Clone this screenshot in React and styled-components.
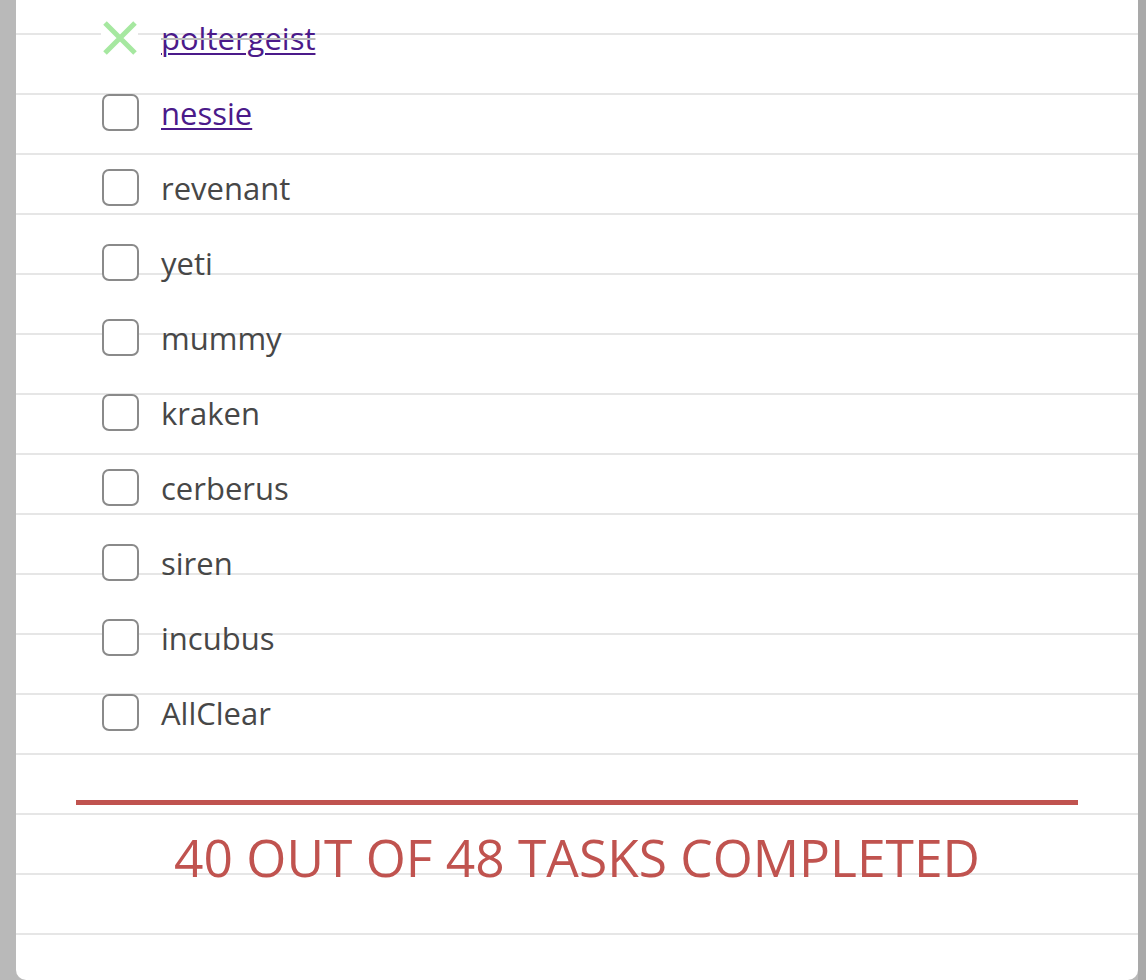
import React from "react";
import styled, { createGlobalStyle } from "styled-components";

const GlobalStyle = createGlobalStyle`
  body {
    margin: 0;
    background-color: #b9b9b9;
    font-family: "Open Sans", "Noto Sans", sans-serif;
  }
`;

const Page = styled.div`
  display: flex;
  height: 980px;
  padding-left: 16px;
  box-sizing: border-box;
`;

const Sheet = styled.main`
  flex: 1;
  display: flex;
  flex-direction: column;
  background-color: #ffffff;
  background-image: repeating-linear-gradient(
    to bottom,
    transparent 0 33px,
    #e6e6e6 33px 35px,
    transparent 35px 60px
  );
  border-radius: 0 0 10px 10px;
  overflow: hidden;
`;

const ScrollTrack = styled.div`
  width: 8px;
  background-color: #a9a9a9;
`;

const TaskList = styled.ul`
  list-style: none;
  margin: 0;
  padding: 0 0 0 86px;
`;

const Task = styled.li`
  height: 75px;
  display: flex;
  align-items: center;
  gap: 22px;
  font-size: 31px;
  color: #474747;
`;

const Box = styled.span`
  width: 37px;
  height: 37px;
  box-sizing: border-box;
  border: 2px solid #8a8a8a;
  border-radius: 7px;
  background: #ffffff;
  flex-shrink: 0;
`;

const Cross = styled.span`
  width: 37px;
  height: 37px;
  display: flex;
  align-items: center;
  justify-content: center;
  background: #ffffff;
  flex-shrink: 0;
  margin-left: -1px;
  margin-right: 1px;
`;

const Done = styled.span`
  color: #bdbdbd;
  text-decoration: line-through;
  text-decoration-thickness: 2px;
`;

const Link = styled.a`
  color: #4b1a8a;
  text-decoration: underline;
  text-decoration-thickness: 2px;
  text-underline-offset: 3px;
`;

const Divider = styled.hr`
  border: 0;
  height: 5px;
  margin: 50px 60px 0;
  background-color: #c0534f;
`;

const Summary = styled.p`
  margin: 17px 0 0;
  text-align: center;
  font-size: 51.5px;
  line-height: 70px;
  color: #c0534f;
`;

const tasks = [
  { name: "poltergeist", done: true, link: true },
  { name: "nessie", link: true },
  { name: "revenant" },
  { name: "yeti" },
  { name: "mummy" },
  { name: "kraken" },
  { name: "cerberus" },
  { name: "siren" },
  { name: "incubus" },
  { name: "AllClear" },
];

const CrossIcon = () => (
  <svg width="36" height="36" viewBox="0 0 36 36">
    <path
      d="M3 3 L33 33 M33 3 L3 33"
      stroke="#a6e8a0"
      strokeWidth="5"
      fill="none"
    />
  </svg>
);

const App = () => {
  return (
    <Page>
      <GlobalStyle />
      <Sheet>
        <TaskList>
          {tasks.map((t) => {
            const label = t.link ? <Link href="#">{t.name}</Link> : t.name;
            return (
              <Task key={t.name}>
                {t.done ? (
                  <Cross>
                    <CrossIcon />
                  </Cross>
                ) : (
                  <Box />
                )}
                {t.done ? <Done>{label}</Done> : <span>{label}</span>}
              </Task>
            );
          })}
        </TaskList>
        <Divider />
        <Summary>40 OUT OF 48 TASKS COMPLETED</Summary>
      </Sheet>
      <ScrollTrack />
    </Page>
  );
};

export default App;
